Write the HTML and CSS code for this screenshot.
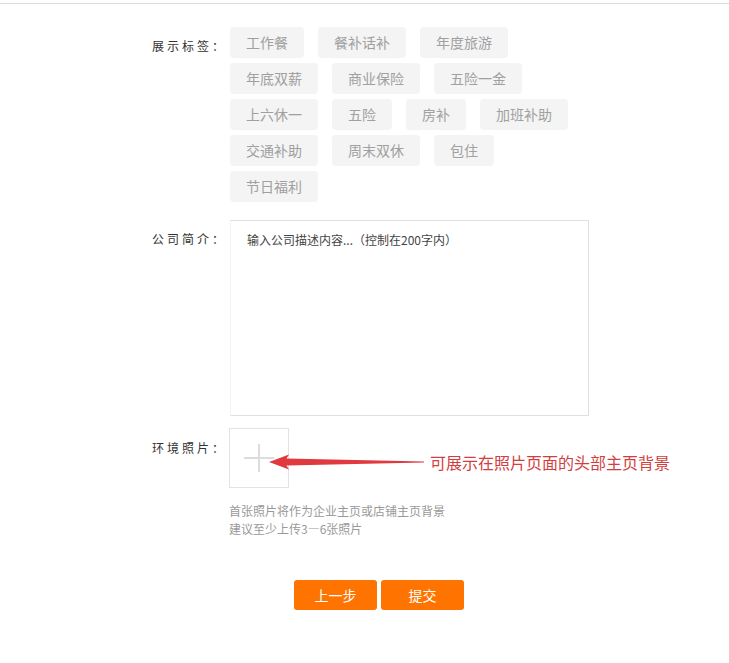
FILE: index.html
```html
<!DOCTYPE html>
<html lang="zh-CN">
<head>
<meta charset="utf-8">
<title>企业信息</title>
<link rel="stylesheet" href="styles.css">
</head>
<body>
<div class="topbar"></div>
<form class="form">
  <div class="row">
    <label class="lbl">展示标签：</label>
    <div class="tags">
      <span class="tag">工作餐</span>
      <span class="tag">餐补话补</span>
      <span class="tag">年度旅游</span>
      <span class="tag">年底双薪</span>
      <span class="tag">商业保险</span>
      <span class="tag">五险一金</span>
      <span class="tag">上六休一</span>
      <span class="tag">五险</span>
      <span class="tag">房补</span>
      <span class="tag">加班补助</span>
      <span class="tag">交通补助</span>
      <span class="tag">周末双休</span>
      <span class="tag">包住</span>
      <span class="tag">节日福利</span>
    </div>
  </div>
  <div class="row row-intro">
    <label class="lbl">公司简介：</label>
    <textarea class="intro" placeholder="输入公司描述内容...（控制在200字内）"></textarea>
  </div>
  <div class="row row-photo">
    <label class="lbl lbl-photo">环境照片：</label>
    <div class="photo-area">
      <div class="upload">
        <svg width="30" height="28" viewBox="0 0 30 28"><path d="M15 0V28M0 14H30" stroke="#dcdcdc" stroke-width="2" fill="none"/></svg>
      </div>
      <p class="hint">首张照片将作为企业主页或店铺主页背景<br>建议至少上传3—6张照片</p>
      <div class="note">
        <svg class="arrow" width="160" height="22" viewBox="0 0 160 22"><polygon points="1,11 21,3.5 18.5,7.5 156,10.5 156,11.6 18.5,14.5 21,18.5" fill="#e0393f"/></svg>
        <span class="note-text">可展示在照片页面的头部主页背景</span>
      </div>
    </div>
  </div>
  <div class="actions">
    <button type="button" class="btn">上一步</button>
    <button type="button" class="btn">提交</button>
  </div>
</form>
</body>
</html>
```

FILE: styles.css
```css
* { box-sizing: border-box; }
body {
  margin: 0;
  background: #fff;
  font-family: "Noto Sans CJK SC", "Microsoft YaHei", sans-serif;
  color: #333;
}
.topbar {
  height: 4px;
  border-bottom: 1px solid #dcdcdc;
}
.form {
  padding: 23px 0 0 152px;
}
.row {
  display: flex;
  align-items: flex-start;
}
.lbl {
  width: 78px;
  flex: none;
  padding-top: 10px;
  font-size: 12px;
  line-height: 18px;
  letter-spacing: 3px;
  color: #333;
  white-space: nowrap;
}
.tags {
  width: 350px;
  display: flex;
  flex-wrap: wrap;
  column-gap: 14px;
  row-gap: 5px;
}
.tag {
  height: 31px;
  line-height: 31px;
  padding: 0 16px;
  background: #f4f4f4;
  border-radius: 4px;
  font-size: 14px;
  color: #a0a0a0;
}
.row-intro {
  margin-top: 18px;
}
.intro {
  display: block;
  width: 359px;
  height: 196px;
  margin: 0;
  padding: 10px 16px;
  border: 1px solid #e0e0e0;
  border-left-color: #f2f2f2;
  font-family: "Noto Sans CJK SC", "Microsoft YaHei", sans-serif;
  font-size: 12px;
  line-height: 18px;
  color: #333;
  resize: none;
  outline: none;
}
.intro::placeholder {
  color: #444;
}
.row-photo {
  margin-top: 12px;
}
.lbl-photo {
  padding-top: 11px;
}
.photo-area {
  position: relative;
  margin-left: -1px;
}
.upload {
  width: 60px;
  height: 60px;
  border: 1px solid #e3e3e3;
  display: flex;
  align-items: center;
  justify-content: center;
}
.hint {
  margin: 14px 0 0;
  font-size: 12px;
  line-height: 18px;
  color: #999;
}
.note {
  position: absolute;
  left: 39px;
  top: 23px;
  display: flex;
  align-items: center;
  gap: 2px;
  white-space: nowrap;
}
.arrow {
  display: block;
}
.note-text {
  font-size: 16px;
  line-height: 22px;
  color: #d23e40;
}
.actions {
  display: flex;
  gap: 4px;
  margin: 42px 0 0 142px;
}
.btn {
  width: 83px;
  height: 30px;
  border: 0;
  border-radius: 3px;
  background: #ff7400;
  color: #fff;
  font-family: "Noto Sans CJK SC", "Microsoft YaHei", sans-serif;
  font-size: 14px;
  line-height: 30px;
  padding: 0;
}
```
